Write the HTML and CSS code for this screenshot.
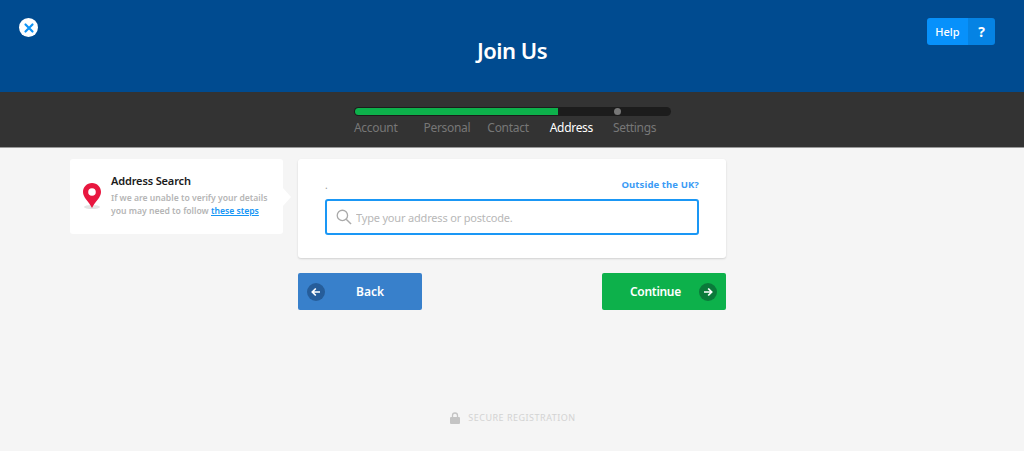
FILE: index.html
```html
<!DOCTYPE html>
<html lang="en">
<head>
    <meta charset="UTF-8">
    <meta name="viewport" content="width=device-width, initial-scale=1.0">
    <title>Join Us</title>
    <link rel="stylesheet" href="styles.css">
</head>
<body>
    <header class="top-bar">
        <a href="#" class="close-btn" aria-label="Close">
            <svg width="12" height="12" viewBox="0 0 12 12"><path d="M2.500 2.500l7 7M9.500 2.500l-7 7" stroke="#0f93f5" stroke-width="2.200" stroke-linecap="round" fill="none"/></svg>
        </a>
        <h1>Join Us</h1>
        <a href="#" class="help-btn"><span class="help-label">Help</span><span class="help-mark">?</span></a>
    </header>

    <div class="progress-bar">
        <div class="track">
            <div class="track-fill"></div>
            <div class="track-dot"></div>
        </div>
        <ul class="steps">
            <li class="step-account">Account</li>
            <li class="step-personal">Personal</li>
            <li class="step-contact">Contact</li>
            <li class="step-address active">Address</li>
            <li class="step-settings">Settings</li>
        </ul>
    </div>

    <main class="content">
        <aside class="side-card">
            <svg class="pin" width="20" height="30" viewBox="0 0 20 30">
                <ellipse cx="10" cy="25" rx="8" ry="2" fill="#e4e4e4"/>
                <path d="M10 1C4.800 1 1 5 1 10c0 5.500 5.500 9 9 16 3.500-7 9-10.500 9-16 0-5-3.800-9-9-9z" fill="#e8173f"/>
                <circle cx="10" cy="10" r="3.800" fill="#fff"/>
            </svg>
            <div class="side-text">
                <h2>Address Search</h2>
                <p>If we are unable to verify your details you may need to follow <a href="#">these steps</a></p>
            </div>
        </aside>

        <div class="form-col">
            <section class="form-card">
                <div class="form-row">
                    <span class="dot-label">.</span>
                    <a href="#" class="outside-link">Outside the UK?</a>
                </div>
                <div class="search-box">
                    <svg width="16" height="16" viewBox="0 0 17 17"><circle cx="6.800" cy="6.800" r="5.500" stroke="#aaa" stroke-width="1.400" fill="none"/><path d="M10.800 10.800l5.200 5.200" stroke="#aaa" stroke-width="1.500" fill="none"/></svg>
                    <input type="text" placeholder="Type your address or postcode.">
                </div>
            </section>

            <div class="buttons">
                <a href="#" class="nav-btn back-btn">
                    <span class="btn-icon">
                        <svg width="10" height="10" viewBox="0 0 10 10"><path d="M9 5H1.500M4.800 1.500L1.300 5l3.500 3.500" stroke="#fff" stroke-width="1.700" fill="none"/></svg>
                    </span>
                    Back
                </a>
                <a href="#" class="nav-btn next-btn">
                    Continue
                    <span class="btn-icon">
                        <svg width="10" height="10" viewBox="0 0 10 10"><path d="M1 5h7.500M5.200 1.500L8.700 5 5.200 8.500" stroke="#fff" stroke-width="1.700" fill="none"/></svg>
                    </span>
                </a>
            </div>
        </div>
    </main>

    <footer class="secure">
        <svg width="10" height="12" viewBox="0 0 10 12"><path d="M2.500 5V3.500a2.500 2.500 0 0 1 5 0V5" stroke="#c4c4c4" stroke-width="1.300" fill="none"/><rect y="5" width="10" height="7" rx="1" fill="#c4c4c4"/></svg>
        <span>SECURE REGISTRATION</span>
    </footer>
</body>
</html>
```

FILE: styles.css
```css
* {
    margin: 0;
    padding: 0;
    box-sizing: border-box;
    font-family: "Noto Sans", sans-serif;
}

body {
    background: #f5f5f5;
    height: 451px;
    overflow: hidden;
}

a {
    text-decoration: none;
}

.top-bar {
    background: #004b90;
    height: 92px;
    padding: 18px 29px 0 19px;
    display: grid;
    grid-template-columns: 68px 1fr 68px;
    align-items: start;
}

.close-btn {
    width: 19px;
    height: 19px;
    border-radius: 50%;
    background: #fff;
    display: flex;
    align-items: center;
    justify-content: center;
}

.top-bar h1 {
    color: #fff;
    font-size: 22px;
    font-weight: 600;
    letter-spacing: -0.5px;
    line-height: 32px;
    margin-top: 16px;
    padding-left: 10px;
    text-align: center;
}

.help-btn {
    justify-self: end;
    display: flex;
    width: 68px;
    height: 27px;
    border-radius: 3px;
    overflow: hidden;
    color: #fff;
    font-size: 11px;
    font-weight: 500;
    line-height: 27px;
    text-align: center;
}

.help-label {
    width: 41px;
    background: #0791fb;
}

.help-mark {
    flex: 1;
    background: #0583e4;
    font-size: 14px;
    font-weight: 700;
}

.progress-bar {
    background: #333;
    height: 56px;
    padding: 15px 0 0 354px;
    border-bottom: 1px solid #999;
}

.track {
    position: relative;
    width: 317px;
    height: 9px;
    background: #1c1c1c;
    border-radius: 5px;
}

.track-fill {
    position: absolute;
    top: 1px;
    left: 1px;
    width: 203px;
    height: 7px;
    background: #0db14b;
    border-radius: 4px 0 0 4px;
}

.track-dot {
    position: absolute;
    top: 1px;
    left: 260px;
    width: 7px;
    height: 7px;
    border-radius: 50%;
    background: #777;
}

.steps {
    list-style: none;
    display: flex;
    color: #777;
    font-size: 12px;
    letter-spacing: -0.3px;
    line-height: 16px;
    margin-top: 4px;
}

.step-personal { margin-left: 26px; }
.step-contact { margin-left: 17px; }
.step-address { margin-left: 21px; }
.step-settings { margin-left: 20px; }

.steps .active {
    color: #fff;
}

.content {
    display: flex;
    align-items: flex-start;
    gap: 15px;
    padding: 11px 0 0 70px;
}

.side-card {
    position: relative;
    width: 213px;
    height: 75px;
    background: #fff;
    border-radius: 3px;
    display: flex;
    gap: 9px;
    padding: 14px 10px 0 12px;
}

.side-card::after {
    content: "";
    position: absolute;
    top: 29px;
    right: -8px;
    border-top: 9px solid transparent;
    border-bottom: 9px solid transparent;
    border-left: 8px solid #fff;
}

.pin {
    flex: none;
    margin-top: 9px;
}

.side-text h2 {
    color: #1a1a1a;
    font-size: 11px;
    font-weight: 600;
    letter-spacing: -0.15px;
    line-height: 16px;
}

.side-text p {
    color: #b5b5b5;
    font-size: 8.600px;
    font-weight: 600;
    line-height: 12.500px;
    margin-top: 3px;
}

.side-text a {
    color: #1595f5;
    text-decoration: underline;
}

.form-col {
    width: 428px;
}

.form-card {
    background: #fff;
    height: 99px;
    border-radius: 3px;
    box-shadow: 0 1px 2px rgba(0, 0, 0, 0.15);
    padding: 18px 27px 0;
}

.form-row {
    display: flex;
    justify-content: space-between;
    align-items: center;
    height: 16px;
}

.dot-label {
    color: #999;
    font-size: 10px;
}

.outside-link {
    color: #3a9bf5;
    font-size: 9.500px;
    font-weight: 700;
    letter-spacing: 0.1px;
    margin-bottom: 2px;
}

.search-box {
    display: flex;
    align-items: center;
    gap: 4px;
    height: 36px;
    margin-top: 6px;
    padding: 0 9px;
    background: #fff;
    border: 2px solid #1a97f5;
    border-radius: 3px;
}

.search-box input {
    flex: 1;
    border: none;
    outline: none;
    font-size: 11px;
    letter-spacing: -0.18px;
    color: #333;
}

.search-box input::placeholder {
    color: #b8b8b8;
    opacity: 1;
}

.buttons {
    display: flex;
    justify-content: space-between;
    margin-top: 15px;
}

.nav-btn {
    display: flex;
    align-items: center;
    width: 124px;
    height: 37px;
    border-radius: 2px;
    color: #fff;
    font-size: 12px;
    font-weight: 600;
    padding: 0 9px;
}

.back-btn {
    background: #3880cb;
    gap: 31px;
}

.next-btn {
    background: #0db14b;
    padding-left: 28px;
    justify-content: space-between;
    letter-spacing: -0.3px;
}

.btn-icon {
    width: 18px;
    height: 18px;
    border-radius: 50%;
    display: flex;
    align-items: center;
    justify-content: center;
}

.back-btn .btn-icon {
    background: #265d9a;
}

.next-btn .btn-icon {
    background: #0a7a3a;
}

.secure {
    display: flex;
    justify-content: center;
    align-items: center;
    gap: 8px;
    margin-top: 101px;
    padding-left: 2px;
    color: #d3d3d3;
    font-size: 9px;
    letter-spacing: 0.5px;
}
```
